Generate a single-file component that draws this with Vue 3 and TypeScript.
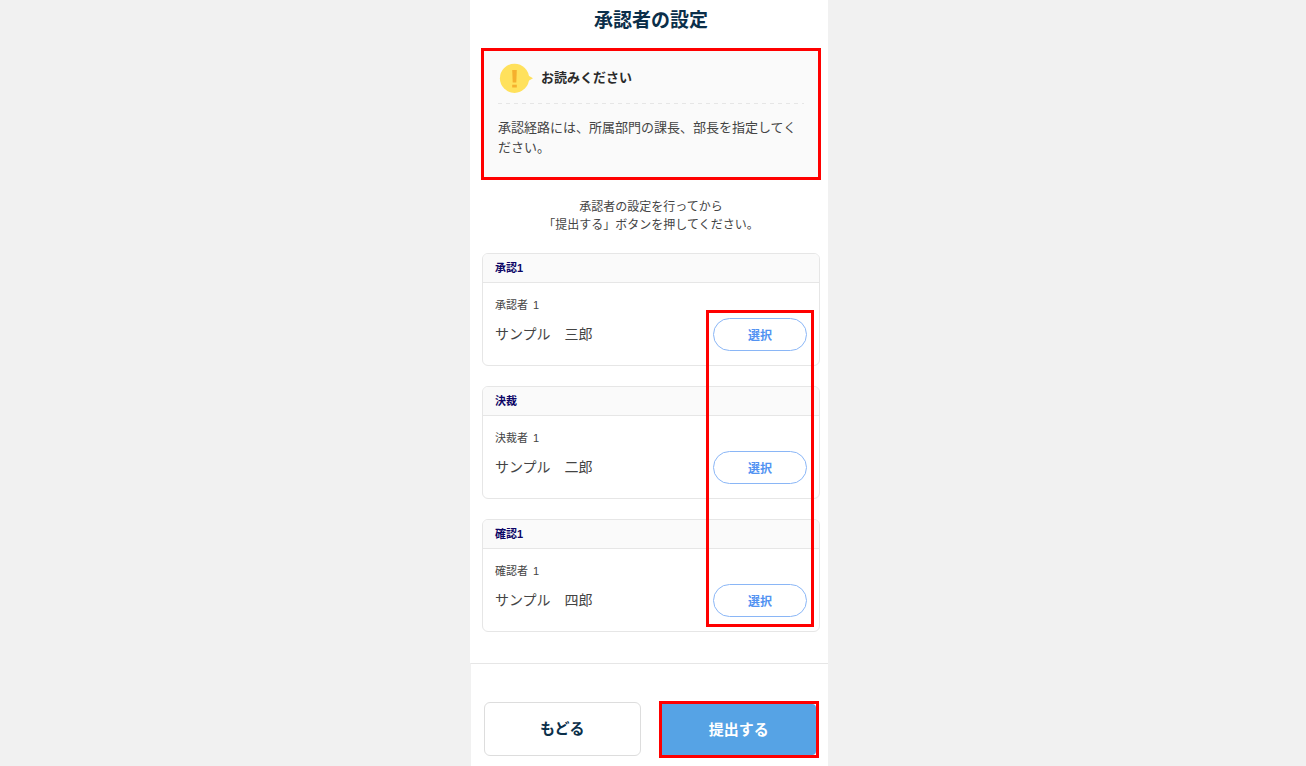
<script setup lang="ts">
interface Step {
  id: string
  title: string
  role: string
  order: number
  person: string
}

const steps: Step[] = [
  { id: 'approve', title: '承認1', role: '承認者', order: 1, person: 'サンプル　三郎' },
  { id: 'decide', title: '決裁', role: '決裁者', order: 1, person: 'サンプル　二郎' },
  { id: 'confirm', title: '確認1', role: '確認者', order: 1, person: 'サンプル　四郎' },
]
</script>

<template>
  <div class="page">
    <main class="sheet">
      <div class="content">
        <h1 class="title">承認者の設定</h1>

        <section class="notice" aria-labelledby="notice-title">
          <div class="notice-head">
            <svg class="notice-icon" width="34" height="30" viewBox="0 0 34 30" aria-hidden="true">
              <path d="M28 11.7 L34 15.3 L28 18.8 Z" fill="#ffe15c" />
              <circle cx="15.5" cy="15.3" r="14.6" fill="#ffe15c" />
              <path d="M13.2 7 H17.8 L17.3 19.5 H13.7 Z" fill="#f5b02e" />
              <rect x="13.2" y="21.7" width="4.6" height="2.8" fill="#f5b02e" />
            </svg>
            <h2 id="notice-title" class="notice-title">お読みください</h2>
          </div>
          <p class="notice-text">承認経路には、所属部門の課長、部長を指定してください。</p>
        </section>

        <p class="lead">承認者の設定を行ってから<br />「提出する」ボタンを押してください。</p>

        <div class="steps">
          <section v-for="step in steps" :key="step.id" class="card">
            <h3 class="card-title">{{ step.title }}</h3>
            <div class="card-body">
              <div class="person">
                <p :id="step.id + '-role'" class="role">
                  <span>{{ step.role }}</span>
                  <span>{{ step.order }}</span>
                </p>
                <p class="name">{{ step.person }}</p>
              </div>
              <button type="button" class="select" :aria-describedby="step.id + '-role'">選択</button>
            </div>
          </section>
          <div class="marker" aria-hidden="true"></div>
        </div>
      </div>

      <footer class="actions">
        <button type="button" class="back">もどる</button>
        <div class="submit-frame">
          <button type="button" class="submit">提出する</button>
        </div>
      </footer>
    </main>
  </div>
</template>

<style>
body {
  margin: 0;
  background: #f1f1f1;
}
</style>

<style scoped>
.page {
  min-height: 100vh;
  box-sizing: border-box;
  display: flex;
  justify-content: center;
  padding-right: 8px;
  background: #f1f1f1;
  color: #444;
  font-family: "Liberation Sans", "Noto Sans CJK JP", sans-serif;
}

.page * {
  box-sizing: border-box;
}

h1,
h2,
h3,
p {
  margin: 0;
}

button {
  font-family: inherit;
  font-weight: 700;
  padding: 0;
  cursor: pointer;
}

.sheet {
  width: 100%;
  max-width: 358px;
  display: flex;
  flex-direction: column;
  background: #fff;
}

.content {
  padding: 7px 8px 13px 12px;
}

.title {
  color: #0b2f4a;
  font-size: 19px;
  line-height: 28px;
  text-align: center;
}

.notice {
  margin: 13px -1px 0;
  padding: 12px 14px 19px;
  border: 3px solid #f00;
  background: #fafafa;
}

.notice-head {
  display: flex;
  align-items: center;
  gap: 8px;
  padding: 0 0 11px 1px;
  background: repeating-linear-gradient(to right, #e6e6e6 0 4px, transparent 4px 8px) left bottom / 100% 1px no-repeat;
}

.notice-icon {
  display: block;
}

.notice-title {
  color: #2a2a2a;
  font-size: 13px;
  line-height: 28px;
}

.notice-text {
  padding-top: 14px;
  font-size: 13px;
  line-height: 20px;
}

.lead {
  padding: 18px 0 19px;
  font-size: 12px;
  line-height: 18px;
  text-align: center;
}

.steps {
  position: relative;
  display: flex;
  flex-direction: column;
  gap: 20px;
}

.card {
  border: 1px solid #e6e6e6;
  border-radius: 6px;
  overflow: hidden;
}

.card-title {
  padding: 4px 12px;
  border-bottom: 1px solid #e6e6e6;
  background: #fafafa;
  color: #0c0566;
  font-size: 11px;
  line-height: 20px;
}

.card-body {
  display: flex;
  align-items: flex-end;
  justify-content: space-between;
  padding: 13px 12px 14px;
}

.person {
  display: flex;
  flex-direction: column;
  gap: 10px;
}

.role {
  display: flex;
  gap: 5px;
  font-size: 11px;
  line-height: 18px;
}

.name {
  padding-bottom: 7px;
  font-size: 14px;
  line-height: 20px;
}

.select {
  width: 94px;
  height: 33px;
  border: 1px solid #8ab6f6;
  border-radius: 17px;
  background: #fff;
  color: #5393f2;
  font-size: 12px;
}

.marker {
  position: absolute;
  top: 57px;
  right: 6px;
  bottom: 5px;
  width: 108px;
  border: 3px solid #f00;
  pointer-events: none;
}

.actions {
  flex: 1;
  display: flex;
  align-items: flex-start;
  gap: 18px;
  margin-top: 18px;
  padding: 37px 9px 8px 13px;
  border-top: 1px solid #e6e6e6;
  border-left: 1px solid #f1f1f1;
}

.back {
  flex: 1;
  height: 54px;
  margin-top: 1px;
  padding-bottom: 3px;
  border: 1px solid #ddd;
  border-radius: 6px;
  background: #fff;
  color: #0b2f4a;
  font-size: 15px;
}

.submit-frame {
  flex: 1;
  border: 3px solid #f00;
  background: #fff;
}

.submit {
  display: block;
  width: 100%;
  height: 51px;
  padding-bottom: 3px;
  border: 0;
  border-radius: 0 4px 4px 0;
  background: #56a3e5;
  color: #fff;
  font-size: 15px;
}
</style>
